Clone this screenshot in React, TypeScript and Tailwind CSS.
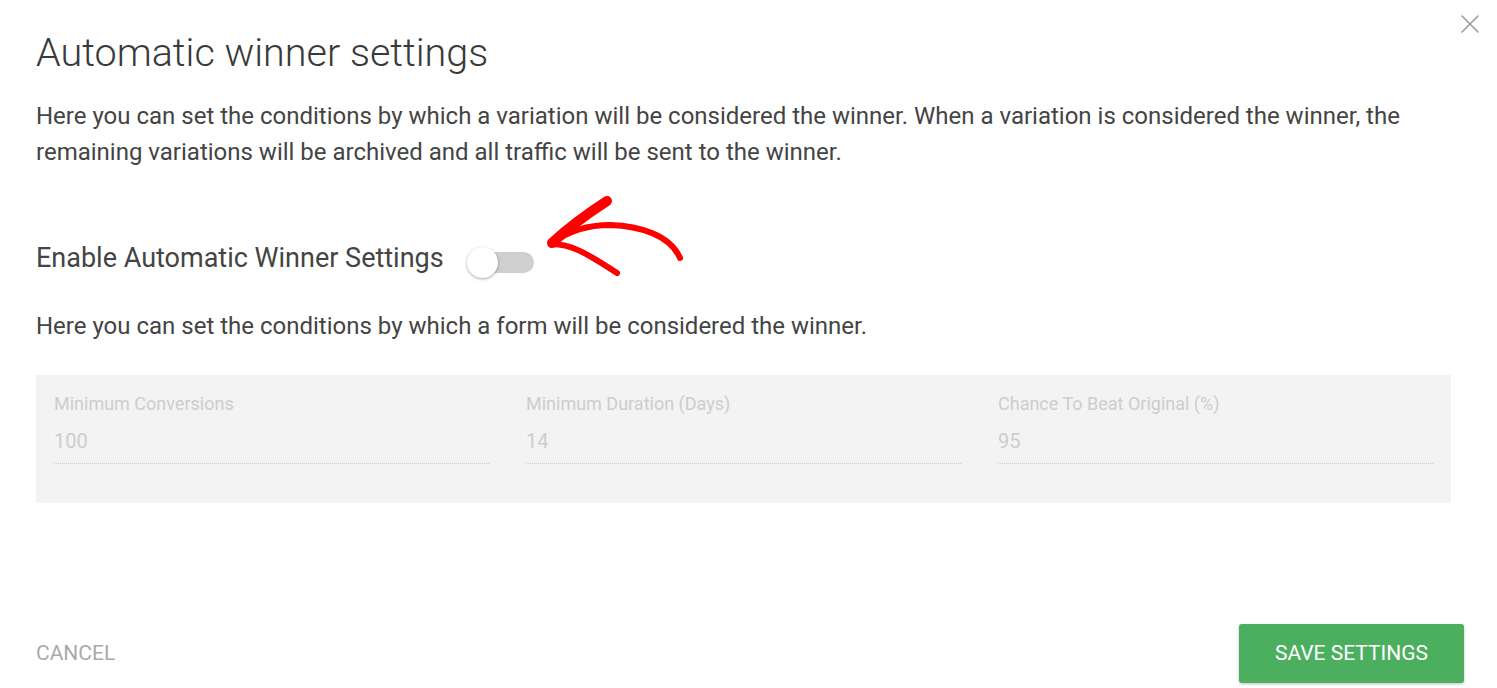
import React from 'react';

const fields = [
  { label: 'Minimum Conversions', value: '100' },
  { label: 'Minimum Duration (Days)', value: '14' },
  { label: 'Chance To Beat Original (%)', value: '95' },
];

const Arrow = () => (
  <svg
    className="absolute left-[530px] top-[190px] pointer-events-none"
    width="170"
    height="100"
    viewBox="0 0 170 100"
    fill="none"
    stroke="#ff0000"
    strokeLinecap="round"
    strokeLinejoin="round"
  >
    <path d="M77 11 C60 22 38 38 22 53" strokeWidth="10" />
    <path d="M22 53 C40 40 60 35 80 35 C110 36 140 45 150 68" strokeWidth="6" />
    <path d="M22 54 C40 54 55 62 87 83" strokeWidth="6" />
  </svg>
);

export default function App() {
  return (
    <div className="relative w-full h-[688px] bg-white overflow-hidden" style={{ fontFamily: 'Roboto, "Liberation Sans", sans-serif' }}>
      <button className="absolute right-[18px] top-[15px] text-[#9a9a9a]">
        <svg width="18" height="18" viewBox="0 0 18 18" stroke="currentColor" strokeWidth="1.6" strokeLinecap="round">
          <path d="M1 1 L17 17 M17 1 L1 17" />
        </svg>
      </button>

      <div className="flex flex-col h-full pl-[36px] pr-[46px]">
        <h1 className="mt-[30px] text-[39.5px] leading-[46px] font-light text-[#3a3a3a]">Automatic winner settings</h1>
        <p className="mt-[22px] text-[24px] leading-[36px] text-[#444]">
          Here you can set the conditions by which a variation will be considered the winner. When a variation is considered the winner, the remaining variations will be archived and all traffic will be sent to the winner.
        </p>

        <div className="mt-[72px] flex items-center">
          <span className="text-[27px] leading-[32px] text-[#444]">Enable Automatic Winner Settings</span>
          <div className="relative ml-[26px] mt-[8px] w-[64px] h-[21px] rounded-full bg-[#cfcfcf]">
            <div className="absolute left-[-3px] top-[-5px] w-[31px] h-[31px] rounded-full bg-white shadow-[0_1px_3px_rgba(0,0,0,0.35)]" />
          </div>
        </div>

        <p className="mt-[34px] text-[24px] leading-[36px] text-[#444]">
          Here you can set the conditions by which a form will be considered the winner.
        </p>

        <div className="mt-[31px] bg-[#f3f3f3] px-[18px] pt-[19px] pb-[39px] grid grid-cols-3 gap-[37px]">
          {fields.map(f => (
            <div key={f.label} className="flex flex-col">
              <span className="text-[18px] leading-[20px] text-[#cdcdcd]">{f.label}</span>
              <span className="mt-[15px] text-[20px] leading-[24px] text-[#cdcdcd]">{f.value}</span>
              <div className="mt-[10px] border-b border-dotted border-[#cfcfcf]" />
            </div>
          ))}
        </div>

        <div className="mt-auto mb-[5px] mr-[-13px] flex items-center justify-between">
          <button className="text-[21px] text-[#aaaaaa] uppercase">Cancel</button>
          <button className="w-[225px] h-[59px] rounded-[3px] bg-[#4caf5f] text-white text-[21px] shadow-[0_1px_3px_rgba(0,0,0,0.25)]">
            SAVE SETTINGS
          </button>
        </div>
      </div>

      <Arrow />
    </div>
  );
}
